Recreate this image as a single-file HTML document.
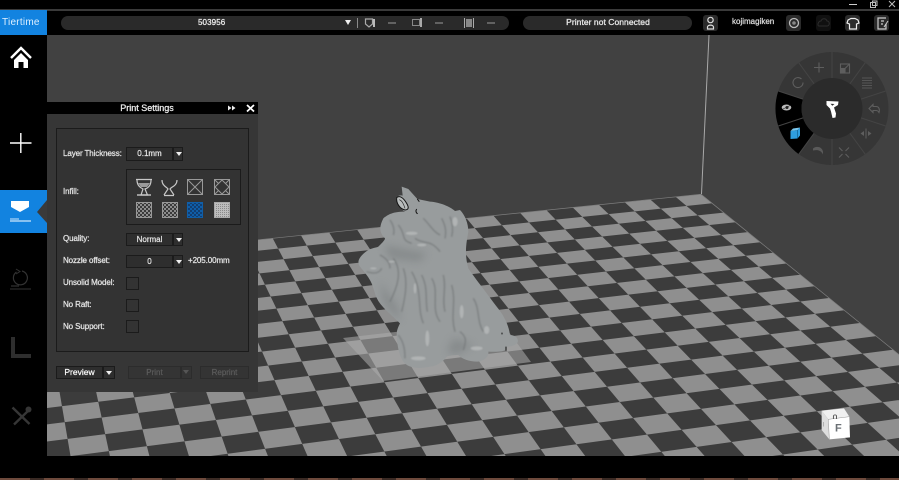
<!DOCTYPE html>
<html><head><meta charset="utf-8"><style>
html,body{margin:0;padding:0;background:#000;width:899px;height:480px;overflow:hidden}
#r{position:relative;width:899px;height:480px;overflow:hidden;background:#000;font-family:"Liberation Sans",sans-serif;color:#e4e4e4}
#r div{position:absolute;box-sizing:border-box}
#view{left:47px;top:35px;width:852px;height:421px;background:#414141;overflow:hidden}
.t{font-size:8px;line-height:12px;white-space:nowrap;letter-spacing:-.1px;-webkit-text-stroke:.25px currentColor}
.dd{background:#2e2e2e;border:1px solid #1b1b1b;text-align:center;font-size:8px;line-height:11px;color:#e8e8e8;-webkit-text-stroke:.2px currentColor}
.ar{background:#2e2e2e;border:1px solid #1b1b1b}
.ar:after{content:"";position:absolute;left:2px;top:4px;border:3px solid transparent;border-top:4px solid #eee;border-bottom:0}
.cb{left:126px;width:13px;height:13px;background:#333;border:1px solid #1b1b1b}
.pill{background:#2a2a2a;border-radius:7px;height:14px;top:16px}
.btn{top:15px;width:15px;height:16px;background:#2b2b2b;border-radius:3px}
</style></head><body><div id="r">
<div style="left:0;top:9px;width:899px;height:2px;background:#3a3a3a"></div>
<div id="view">
<svg style="position:absolute;left:0;top:0" width="852" height="421" viewBox="47 35 852 421">
 <polygon points="701,194.3 1024.2,456 -8.2,456 -23.8,268.8" fill="#8f8f8f"/>
 <path fill="#3c3c3c" fill-rule="evenodd" d="
 M712.2,203.3L723.7,212.6L-21.9,291.5L-22.9,280Z
 M735.5,222.2L747.7,232.1L-19.9,315.8L-20.9,303.5Z
 M760.2,242.2L773.1,252.7L-17.7,341.8L-18.8,328.6Z
 M786.5,263.5L800.2,274.7L-15.4,369.6L-16.6,355.4Z
 M814.4,286.2L829.1,298L-12.9,399.4L-14.2,384.2Z
 M844.3,310.3L859.9,323L-10.3,431.5L-11.6,415.2Z
 M876.1,336.1L892.9,349.7L71.4,456L-8.2,456L-8.9,448.6Z
 M910.3,363.7L928.3,378.3L350.9,456L210.9,456Z
 M946.9,393.4L966.3,409.1L631.6,456L491.1,456Z
 M986.4,425.4L1007.3,442.3L913.6,456L772.5,456Z
 M675.7,196.9L650.3,199.5L944.2,456L984.2,456Z
 M624.6,202.1L598.8,204.8L864.1,456L904.1,456Z
 M572.8,207.5L546.5,210.2L784.4,456L824.2,456Z
 M520.1,212.9L493.4,215.6L704.6,456L744.5,456Z
 M466.6,218.4L439.5,221.2L624.9,456L664.8,456Z
 M412.3,224L384.8,226.8L545.4,456L585.2,456Z
 M357.1,229.6L329.2,232.5L466,456L505.7,456Z
 M301,235.4L272.7,238.3L386.7,456L426.4,456Z
 M244.1,241.2L215.3,244.2L307.5,456L347.1,456Z
 M186.2,247.2L157,250.2L228.4,456L267.9,456Z
 M127.4,253.2L97.7,256.3L149.4,456L188.9,456Z
 M67.7,259.4L37.4,262.5L70.5,456L109.9,456Z
 M6.9,265.6L-23.8,268.8L-8.2,456L31.1,456Z"/>
</svg>
</div>
<svg style="position:absolute;left:0;top:0" width="899" height="480" viewBox="0 0 899 480">
 <defs>
 <pattern id="h1" width="4" height="4" patternUnits="userSpaceOnUse"><rect width="4" height="4" fill="#3a3a3a"/><circle cx="1" cy="1" r=".9" fill="#c8c8c8"/><circle cx="3" cy="3" r=".9" fill="#c8c8c8"/></pattern>
 <pattern id="h2" width="4" height="4" patternUnits="userSpaceOnUse"><rect width="4" height="4" fill="#0f5ea8"/><circle cx="1" cy="1" r=".9" fill="#13284a"/><circle cx="3" cy="3" r=".9" fill="#13284a"/></pattern>
 <pattern id="h3" width="2" height="2" patternUnits="userSpaceOnUse"><rect width="2" height="2" fill="#bdbdbd"/><rect width="1" height="1" fill="#8a8a8a"/></pattern>
 <filter id="b1" x="-20%" y="-20%" width="140%" height="140%"><feGaussianBlur stdDeviation="2.500"/></filter>
 <filter id="b2" x="-30%" y="-30%" width="160%" height="160%"><feGaussianBlur stdDeviation="12"/></filter>
 <clipPath id="dogc"><path d="M185,35 L205,42 L232,72 L270,80 C300,82 330,95 345,108 L360,105 C375,120 385,145 385,170 C380,200 372,235 385,280 C405,310 430,340 470,395 C490,420 505,445 510,480 C525,480 537,490 533,502 C525,512 510,515 500,515 C505,525 490,532 445,530 C448,545 430,560 410,560 C390,560 365,552 355,540 C340,540 325,542 320,545 C315,555 290,575 270,575 C250,580 210,582 195,565 C180,550 172,520 170,480 C170,465 175,455 180,445 C165,430 135,405 120,385 C105,365 105,350 100,340 C95,320 85,305 60,275 C50,262 55,245 85,225 C100,218 110,218 115,215 C125,205 135,195 135,190 C120,175 115,160 130,130 C145,118 160,110 195,110 C180,100 170,90 168,70 C172,62 180,60 188,62 Z"/></clipPath>
 </defs>
 <path d="M709,35 L701.5,194" stroke="#a8a8a8" stroke-width="1" fill="none"/>
 <path d="M258,239.800 L701,194.300 L899,354.600" stroke="#7d7d7d" stroke-width=".7" fill="none"/>
 <polygon points="343,338 500,320 531,362 383,381" fill="#adadad" fill-opacity=".55"/>
 <!-- dog -->
 <g transform="translate(340 175) scale(.33333)">
  <path d="M185,35 L205,42 L232,72 L270,80 C300,82 330,95 345,108 L360,105 C375,120 385,145 385,170 C380,200 372,235 385,280 C405,310 430,340 470,395 C490,420 505,445 510,480 C525,480 537,490 533,502 C525,512 510,515 500,515 C505,525 490,532 445,530 C448,545 430,560 410,560 C390,560 365,552 355,540 C340,540 325,542 320,545 C315,555 290,575 270,575 C250,580 210,582 195,565 C180,550 172,520 170,480 C170,465 175,455 180,445 C165,430 135,405 120,385 C105,365 105,350 100,340 C95,320 85,305 60,275 C50,262 55,245 85,225 C100,218 110,218 115,215 C125,205 135,195 135,190 C120,175 115,160 130,130 C145,118 160,110 195,110 C180,100 170,90 168,70 C172,62 180,60 188,62 Z" fill="#989c9d"/>
  <g clip-path="url(#dogc)">
   <g filter="url(#b2)" fill="#7d8182" opacity=".6">
    <path d="M130,210 L260,235 L240,260 L150,250Z"/><path d="M340,490 L400,510 L350,540 L320,530Z"/><path d="M120,320 L175,400 L180,440 L130,385Z"/>
   </g>
   <g filter="url(#b1)" fill="none" stroke="#747879" stroke-width="4" opacity=".75">
    <path d="M160,250 C190,290 170,340 150,380"/><path d="M190,280 C205,320 195,370 185,410"/><path d="M215,290 C250,350 230,400 250,445"/><path d="M245,300 C265,340 255,370 262,410"/><path d="M275,310 C300,350 270,400 300,440"/><path d="M310,300 C320,340 305,370 315,410"/><path d="M335,330 C350,380 330,420 345,470"/><path d="M400,370 C420,400 410,440 430,470"/><path d="M225,190 C250,210 270,190 300,230"/><path d="M175,150 C200,180 180,195 215,205"/><path d="M150,135 C160,150 165,165 160,180"/><path d="M250,130 C270,150 280,170 300,180"/><path d="M175,480 C190,500 195,520 195,550"/><path d="M305,130 C315,150 320,165 315,190"/><path d="M330,125 C338,145 340,165 335,185"/><path d="M80,290 C110,300 120,290 125,280"/><path d="M360,470 C385,490 375,505 370,525"/><path d="M120,240 C140,250 150,265 150,280"/>
   </g>
   <g filter="url(#b1)" fill="#c2c5c5" opacity=".6">
    <ellipse cx="215" cy="175" rx="18" ry="5"/><ellipse cx="245" cy="210" rx="14" ry="4"/><ellipse cx="155" cy="260" rx="10" ry="3"/><ellipse cx="262" cy="490" rx="6" ry="24"/><ellipse cx="410" cy="520" rx="18" ry="6"/><ellipse cx="440" cy="465" rx="8" ry="12"/><ellipse cx="100" cy="280" rx="10" ry="3"/><ellipse cx="235" cy="550" rx="22" ry="6"/><ellipse cx="345" cy="140" rx="8" ry="14"/><ellipse cx="225" cy="340" rx="4" ry="16"/><ellipse cx="365" cy="410" rx="6" ry="20"/>
   </g>
  </g>
  <path d="M170,68 C178,60 190,68 200,85 C208,98 205,105 195,105 C180,102 168,85 170,68Z" fill="#b8bcbc" stroke="#111" stroke-width="3"/>
  <path d="M178,74 C186,76 192,90 195,100" fill="none" stroke="#222" stroke-width="2"/>
  <path d="M232,72 L238,80 M230,102 C226,108 228,114 233,116" fill="none" stroke="#111" stroke-width="3"/>
  <path d="M486,473 L486,478 M498,515 L498,527" stroke="#111" stroke-width="3"/>
 </g>
 <!-- cube -->
 <g transform="translate(700 380) scale(.33333)">
  <polygon points="365,92 432,85 448,110 385,118" fill="#f0f0f0"/>
  <polygon points="385,118 448,110 450,172 388,178" fill="#ffffff"/>
  <polygon points="365,92 385,118 388,178 365,150" fill="#dedede"/>
  <path d="M385,118 L448,110 M385,118 L388,178" stroke="#999" stroke-width="1.500"/>
  <text x="415" y="155" font-family="Liberation Sans" font-size="33" font-weight="bold" fill="#6b7075" text-anchor="middle">F</text>
  <text x="405" y="92" font-family="Liberation Sans" font-size="20" font-weight="bold" fill="#555" text-anchor="middle" transform="rotate(180 405 98)">U</text>
  <text x="371" y="140" font-family="Liberation Sans" font-size="18" fill="#888" text-anchor="middle">l</text>
 </g>
 <!-- wheel -->
 <g transform="translate(832 108.5)">
  <circle r="56.500" fill="#363636"/>
  <path d="M-53.700,-17.500 A56.500,56.500 0 0 0 -53.700,17.500 L-29,9.400 A30.500,30.500 0 0 1 -29,-9.400Z" fill="#000"/>
  <path d="M-53.700,17.500 A56.500,56.500 0 0 0 -33.200,45.700 L-17.900,24.700 A30.500,30.500 0 0 1 -29,9.400Z" fill="#000"/>
  <g stroke="#444" stroke-width="1">
   <path d="M0,-30.500V-56.500M17.900,-24.700L33.200,-45.700M29,-9.400L53.700,-17.500M29,9.400L53.700,17.500M17.900,24.700L33.200,45.700M0,30.500V56.500M-17.900,-24.700L-33.200,-45.700M-29,-9.400L-53.700,-17.500M-29,9.400L-53.700,17.500M-17.900,24.700L-33.200,45.700"/>
  </g>
  <circle r="30.500" fill="#2b2b2b"/>
  <path d="M-5.500,-7.500 L6.500,-7 L6,-3.500 L2,-1 L4,5 L3.500,9 L.5,9.500 L-1,3 L-2,0 L-5.500,-3.500Z" fill="#fff"/>
  <path d="M-1.500,-4.800 L2.500,-4.500 L.3,-2.800Z" fill="#2b2b2b"/>
  <g fill="none" stroke="#5e5e5e" stroke-width="1.100">
   <path d="M-13,-46V-36M-18,-41H-8"/>
   <g transform="translate(13,-40)"><rect x="-4.500" y="-4.500" width="9" height="9"/><rect x="-4.500" y="0" width="4.500" height="4.500" fill="#5e5e5e"/><path d="M0,0L4,-4"/></g>
   <path d="M30,-30.500H40M30,-28H40M30,-25.500H40M30,-23H40M30,-20.500H40" stroke="#555"/>
   <path d="M37,0 L41,-4 V-2 H44 C47,-2 48,1 47,4 C46,2 45,2 44,2 H41 V4Z"/>
   <path d="M34,20V30" stroke-width="1"/>
   <path d="M7,39 L10.500,42.500 M17,39 L13.500,42.500 M7,49 L10.500,45.500 M17,49 L13.500,45.500"/>
   <path d="M-30.500,-29.500 A5,5 0 1 0 -29,-26"/>
  </g>
  <path d="M32,22.500 L28.500,25 L32,27.500Z M36,22.500 L39.500,25 L36,27.500Z" fill="#5e5e5e"/>
  <path d="M-19,40 C-16,37 -10,38 -9,43 L-9,46 C-11,42 -14,41 -19,42Z" fill="#5a5a5a"/>
  <ellipse cx="-45.500" cy="-1" rx="4.800" ry="3" fill="#bbb"/><circle cx="-45" cy="-1" r="1.500" fill="#222"/>
  <path d="M-50,1 L-42,-3" stroke="#222" stroke-width=".6"/>
  <polygon points="-41.500,22.500 -34.500,21.500 -32,19 -32,27 -34.500,30 -41.500,30.500" fill="#2f9fe0"/>
  <path d="M-41.500,22.500 L-39,20 L-32,19 L-34.500,21.500Z" fill="#7cc8ee"/>
  <path d="M-34.500,21.500V30" stroke="#0d5f90" stroke-width=".7"/>
 </g>
</svg>

<!-- top bar -->
<div style="left:0;top:11px;width:899px;height:24px;background:#000"></div>
<div style="left:0;top:10px;width:47px;height:25px;background:#1283e0"></div>
<div style="left:2px;top:16px;width:44px;height:13px;font-size:10px;line-height:13px;color:#dff0ff;letter-spacing:.25px;white-space:nowrap">Tiertime</div>
<div class="pill" style="left:61px;width:448px"></div>
<div class="t" style="left:198px;top:17px;color:#eee;font-size:8px;letter-spacing:.1px">503956</div>
<div style="left:345px;top:20px;border:3.500px solid transparent;border-top:5px solid #eee;border-bottom:0"></div>
<div style="left:357px;top:18px;width:1px;height:10px;background:#8a8a8a"></div>
<svg style="position:absolute;left:360px;top:15px" width="145" height="16" viewBox="0 0 145 16" fill="none" stroke="#aaa">
 <path d="M5.500,4H12.500V9L9,12L5.500,9Z" stroke-width="1.200"/><path d="M14,4V12" stroke-width="2" stroke="#bbb"/>
 <path d="M28,8H36" stroke="#999"/>
 <rect x="52.500" y="4.500" width="7" height="6" stroke="#888"/><path d="M61,3V12" stroke-width="2" stroke="#aaa"/>
 <path d="M75,8H83" stroke="#999"/>
 <path d="M104.500,3V13M113.500,3V13" stroke="#aaa"/><rect x="106" y="4" width="6" height="8" fill="#888" stroke="none"/>
 <path d="M127,8H135" stroke="#999"/>
</svg>
<div class="pill" style="left:523px;width:169px"></div>
<div class="t" style="left:523px;width:170px;top:16px;text-align:center;color:#e6e6e6;font-size:8.500px;letter-spacing:.05px;-webkit-text-stroke:.3px #e6e6e6">Printer not Connected</div>
<div class="btn" style="left:703px"></div>
<div class="t" style="left:732px;top:16px;color:#ddd;letter-spacing:0">kojimagiken</div>
<div class="btn" style="left:786px"></div>
<div class="btn" style="left:816px;background:#101010"></div>
<div class="btn" style="left:845px"></div>
<div class="btn" style="left:874px"></div>
<svg style="position:absolute;left:700px;top:0" width="199" height="35" viewBox="0 0 199 35" fill="none" stroke="#ddd">
 <circle cx="10.500" cy="20" r="2.700" stroke-width="1.200"/><path d="M7.500,29V27C7.500,24.500 13.500,24.500 13.500,27V29Z" stroke-width="1.200"/>
 <circle cx="94" cy="23" r="4.500" stroke="#bbb" stroke-width="1.300"/><circle cx="94" cy="23" r="1.800" fill="#888" stroke="none"/>
 <path d="M119,26H127C130,26 130,21 127,21C126,18 122,18 121,21C118,21 117,26 119,26Z" stroke="#2c2c2c"/>
 <path d="M148,20L151,18.500H155L158,20L159,23L156.500,24V29H149.500V24L147,23Z" stroke="#eee" stroke-width="1.200"/>
 <path d="M186,18H178V29H186V24M181,21H184M181,24H183" stroke="#ccc" stroke-width="1.200"/><path d="M188,21L184,27" stroke="#ccc"/>
 <path d="M149,4.500H157" stroke="#ccc" stroke-width="1"/><rect x="170.500" y="2.500" width="5" height="5" stroke="#bbb"/><rect x="172.500" y="1" width="4.500" height="4.500" stroke="#bbb"/>
 <path d="M189,1L195,7M195,1L189,7" stroke="#bbb"/>
</svg>

<!-- sidebar -->
<div style="left:0;top:190px;width:47px;height:43px;background:#1283e0"></div>
<svg style="position:absolute;left:0;top:35px" width="47" height="421" viewBox="0 35 47 421">
 <path d="M11,58 L21,48 L31,58" stroke="#fff" stroke-width="2.400" fill="none"/>
 <path d="M14,60 L21,53 L28,60 V68 H23.500 V62 H18.500 V68 H14Z" fill="#fff"/>
 <path d="M10,143H31.500M20.800,133V153" stroke="#fff" stroke-width="1.400"/>
 <polygon points="47,200 37,212 47,223" fill="#3a3a3a"/>
 <polygon points="11,201 29,201 29,207 20,212 11,207" fill="#fff"/>
 <path d="M10,219H19" stroke="#cfe6fa" stroke-width="1"/><path d="M10,221H31" stroke="#cfe6fa" stroke-width="1.200"/>
 <g fill="none" stroke="#333">
  <path d="M16.500,272 A7,7 0 1 0 22,271" stroke-width="1.200"/><path d="M16,269 L20,271.500 L16,274" stroke-width="1"/>
  <path d="M11,286H19" stroke-width="1.200"/><path d="M10,289H31" stroke-width="1"/>
 </g>
 <path d="M11,337H15V354H31V358H11Z" fill="#2e2e2e"/>
 <path d="M12.500,407.500 L29.500,424 M30,409 L14,424.500" stroke="#363636" stroke-width="2.400"/>
 <circle cx="28.500" cy="409.500" r="3" fill="#363636"/>
</svg>

<!-- panel -->
<div style="left:47px;top:102px;width:211px;height:290px;background:#363636"></div>
<div style="left:47px;top:102px;width:211px;height:12px;background:#000"></div>
<div class="t" style="left:47px;width:200px;top:102px;text-align:center;font-size:9px;letter-spacing:0;color:#eee">Print Settings</div>
<svg style="position:absolute;left:225px;top:102px" width="33" height="12" viewBox="0 0 33 12">
 <path d="M3,3.500L6.500,6L3,8.500ZM7,3.500L10.500,6L7,8.500Z" fill="#eee"/>
 <path d="M22,3L29,9.500M29,3L22,9.500" stroke="#fff" stroke-width="1.800"/>
</svg>
<div style="left:56px;top:128px;width:193px;height:224px;border:1px solid #1b1b1b;background:#333"></div>
<div class="t" style="left:63px;top:148px">Layer Thickness:</div>
<div class="dd" style="left:126px;top:147px;width:47px;height:14px">0.1mm</div><div class="ar" style="left:173px;top:147px;width:10px;height:14px"></div>
<div class="t" style="left:63px;top:186px">Infill:</div>
<div style="left:126px;top:169px;width:115px;height:56px;border:1px solid #1b1b1b"></div>
<svg style="position:absolute;left:126px;top:169px" width="115" height="56" viewBox="126 169 115 56" fill="none" stroke="#c8c8c8">
 <path d="M136,179.500H152M137,180C137,186 141,188 143,189L141,195H147.500L145,189C148,188 151,186 151,180" stroke-width="1.200"/><path d="M138,183H150L147,187H141Z" fill="#9a9a9a" stroke="none"/><path d="M137,195H151" stroke-width="1.400"/>
 <path d="M162,180C162,186 167,187 168,189L164,195M177,180C177,186 171,187 170,189L174,195M164,195.500H174" stroke-width="1.200"/>
 <g stroke="#999"><rect x="187.500" y="179.500" width="15" height="15"/><path d="M188,180L202,194M202,180L188,194"/></g>
 <g stroke="#999"><rect x="214.500" y="179.500" width="15" height="15"/><path d="M222,180L229,187L222,194L215,187ZM215,180L218.500,183.500M229,180L225.500,183.500M215,194L218.500,190.500M229,194L225.500,190.500"/></g>
 <rect x="136.500" y="202.500" width="15" height="15" fill="url(#h1)" stroke="#999"/>
 <rect x="162.500" y="202.500" width="15" height="15" fill="url(#h1)" stroke="#999"/>
 <rect x="187.500" y="202.500" width="15" height="15" fill="url(#h2)" stroke="#0f5ea8"/>
 <rect x="214.500" y="202.500" width="15" height="15" fill="url(#h3)" stroke="#aaa"/>
</svg>
<div class="t" style="left:63px;top:233px">Quality:</div>
<div class="dd" style="left:126px;top:233px;width:47px;height:13px">Normal</div><div class="ar" style="left:173px;top:233px;width:10px;height:13px"></div>
<div class="t" style="left:63px;top:255px">Nozzle offset:</div>
<div class="dd" style="left:126px;top:255px;width:47px;height:13px">0</div><div class="ar" style="left:173px;top:255px;width:10px;height:13px"></div>
<div class="t" style="left:188px;top:255px">+205.00mm</div>
<div class="t" style="left:63px;top:277px">Unsolid Model:</div><div class="cb" style="top:277px"></div>
<div class="t" style="left:63px;top:299px">No Raft:</div><div class="cb" style="top:299px"></div>
<div class="t" style="left:63px;top:321px">No Support:</div><div class="cb" style="top:320px"></div>
<div class="dd" style="left:56px;top:366px;width:47px;height:13px;color:#fff;font-size:8.500px">Preview</div><div class="ar" style="left:103px;top:366px;width:12px;height:13px"></div>
<div class="dd" style="left:128px;top:366px;width:53px;height:13px;color:#5c5c5c;background:#343434;border-color:#2c2c2c">Print</div>
<div style="left:181px;top:366px;width:11px;height:13px;background:#343434;border:1px solid #2c2c2c"></div>
<div style="left:183px;top:370px;border:3px solid transparent;border-top:4px solid #555;border-bottom:0"></div>
<div class="dd" style="left:200px;top:366px;width:49px;height:13px;color:#5c5c5c;background:#343434;border-color:#2c2c2c">Reprint</div>

<div style="left:0;top:478px;width:899px;height:2px;background:repeating-linear-gradient(90deg,#6e4a3c 0 30px,#3a2a24 30px 44px)"></div>
</div></body></html>
